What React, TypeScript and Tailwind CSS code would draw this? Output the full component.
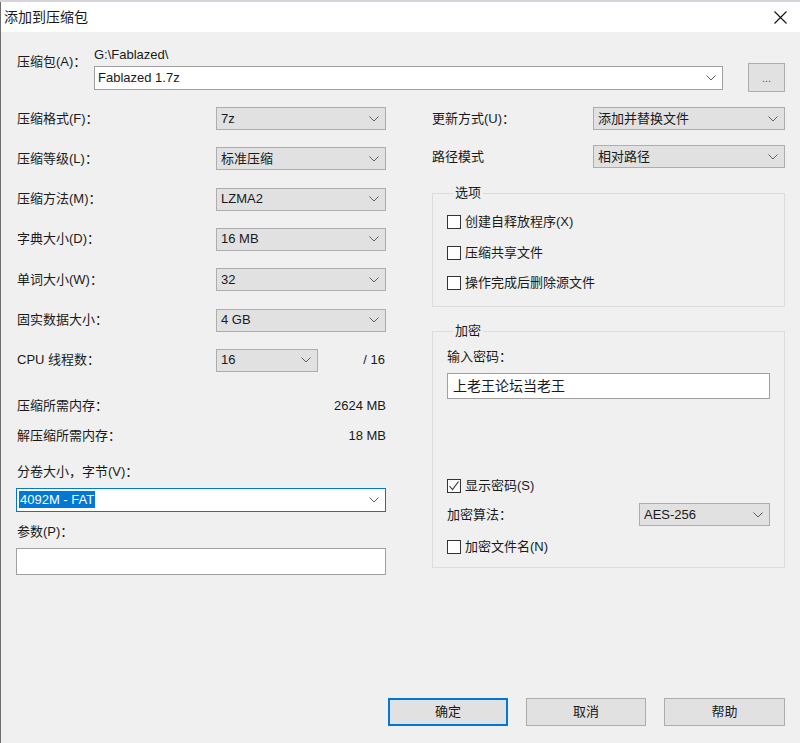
import React from "react"

// little down arrow used on every combo box
function Chevron() {
  return (
    <svg width="10" height="6" viewBox="0 0 10 6" className="shrink-0">
      <polyline points="0.5,0.5 5,5 9.5,0.5" fill="none" stroke="#606060" strokeWidth="1" />
    </svg>
  )
}

function Select({ value, className = "" }: { value: string; className?: string }) {
  return (
    <div
      className={`h-[23px] flex items-center justify-between pl-[4px] pr-[6px] bg-[#e1e1e1] border border-[#adadad] ${className}`}
    >
      <span>{value}</span>
      <Chevron />
    </div>
  )
}

function CheckBox({ label, checked = false }: { label: string; checked?: boolean }) {
  return (
    <div className="h-[16px] flex items-center gap-[4px]">
      <div className="w-[14px] h-[14px] bg-white border border-[#333] flex items-center justify-center">
        {checked && (
          <svg width="12" height="12" viewBox="0 0 12 12">
            <polyline points="1.5,6 4.5,9.5 10.5,1.5" fill="none" stroke="#333" strokeWidth="1.1" />
          </svg>
        )}
      </div>
      <span>{label}</span>
    </div>
  )
}

function Row({ label, children }: { label: string; children: React.ReactNode }) {
  return (
    <div className="h-[23px] flex items-center">
      <span className="flex-1">{label}</span>
      {children}
    </div>
  )
}

export default function App() {
  return (
    <div className="w-[800px] h-[743px] flex flex-col bg-[#f0f0f0] text-[13px] leading-[16px] text-[#1a1a1a] font-['Liberation_Sans','Noto_Sans_CJK_SC',sans-serif]">
      {/* top strip from window behind */}
      <div className="h-[2px] bg-[#d8d4dc]" />

      <div className="flex-1 flex flex-col border-l border-[#6e6e6e]">
        {/* Title bar */}
        <div className="h-[30px] bg-white flex items-center justify-between pl-[3px] pr-[13px]">
          <span className="text-[14px]">添加到压缩包</span>
          <svg width="13" height="13" viewBox="0 0 13 13">
            <path d="M0.5 0.5 L12.5 12.5 M12.5 0.5 L0.5 12.5" stroke="#111" strokeWidth="1.1" />
          </svg>
        </div>

        <div className="flex-1 flex flex-col pl-[16px] pr-[15px]">
          {/* Archive path */}
          <div className="flex items-start mt-[15px]">
            <span className="w-[77px] mt-[7px]">压缩包(A)：</span>
            <div className="flex-1 flex flex-col">
              <span className="h-[16px]">G:\Fablazed\</span>
              <div className="mt-[3px] h-[24px] bg-white border border-[#a0a0a0] flex items-center justify-between pl-[3px] pr-[6px]">
                <span>Fablazed 1.7z</span>
                <Chevron />
              </div>
            </div>
            <div className="ml-[25px] mt-[16px] w-[37px] h-[29px] bg-[#e1e1e1] border border-[#adadad] flex items-center justify-center text-[11px] text-[#555]">
              ...
            </div>
          </div>

          <div className="flex mt-[15px] gap-[46px]">
            {/* Left column */}
            <div className="w-[369px] flex flex-col">
              <div className="flex flex-col gap-[17.33px]">
                <Row label="压缩格式(F)：">
                  <Select value="7z" className="w-[170px]" />
                </Row>
                <Row label="压缩等级(L)：">
                  <Select value="标准压缩" className="w-[170px]" />
                </Row>
                <Row label="压缩方法(M)：">
                  <Select value="LZMA2" className="w-[170px]" />
                </Row>
                <Row label="字典大小(D)：">
                  <Select value="16 MB" className="w-[170px]" />
                </Row>
                <Row label="单词大小(W)：">
                  <Select value="32" className="w-[170px]" />
                </Row>
                <Row label="固实数据大小：">
                  <Select value="4 GB" className="w-[170px]" />
                </Row>
                <div className="h-[23px] flex items-center">
                  <span className="w-[199px]">CPU 线程数：</span>
                  <Select value="16" className="w-[102px]" />
                  <span className="flex-1 text-right pr-[1px]">/ 16</span>
                </div>
              </div>

              <div className="mt-[26px] h-[16px] flex justify-between">
                <span>压缩所需内存：</span>
                <span>2624 MB</span>
              </div>
              <div className="mt-[14px] h-[16px] flex justify-between">
                <span>解压缩所需内存：</span>
                <span>18 MB</span>
              </div>

              <span className="mt-[20px] h-[16px]">分卷大小，字节(V)：</span>
              <div className="mt-[8px] -ml-[1px] w-[370px] h-[24px] bg-white border border-[#0078d7] flex items-center justify-between pl-[2px] pr-[6px]">
                <span className="bg-[#0078d7] text-white px-[1px] leading-[17px]">4092M - FAT</span>
                <Chevron />
              </div>

              <span className="mt-[12px] h-[16px]">参数(P)：</span>
              <div className="mt-[8px] -ml-[1px] w-[370px] h-[27px] bg-white border border-[#a0a0a0]" />
            </div>

            {/* Right column */}
            <div className="w-[353px] flex flex-col">
              <Row label="更新方式(U)：">
                <Select value="添加并替换文件" className="w-[192px]" />
              </Row>
              <div className="mt-[15px]">
                <Row label="路径模式">
                  <Select value="相对路径" className="w-[192px]" />
                </Row>
              </div>

              <fieldset className="mt-[17px] border border-[#dcdcdc] pl-[14px] pb-[15px]">
                <legend className="ml-[6px] px-[2px] h-[16px]">选项</legend>
                <div className="mt-[13px] flex flex-col gap-[14.5px]">
                  <CheckBox label="创建自释放程序(X)" />
                  <CheckBox label="压缩共享文件" />
                  <CheckBox label="操作完成后删除源文件" />
                </div>
              </fieldset>

              <fieldset className="mt-[16px] border border-[#dcdcdc] pl-[14px] pr-[14px] pb-[12px]">
                <legend className="ml-[6px] px-[2px] h-[16px]">加密</legend>
                <span className="block mt-[10px] h-[16px]">输入密码：</span>
                <div className="mt-[8px] h-[26px] bg-white border border-[#a0a0a0] flex items-center pl-[5px] text-[14px]">
                  上老王论坛当老王
                </div>
                <div className="mt-[79px]">
                  <CheckBox label="显示密码(S)" checked />
                </div>
                <div className="mt-[9px]">
                  <Row label="加密算法：">
                    <Select value="AES-256" className="w-[131px]" />
                  </Row>
                </div>
                <div className="mt-[13px]">
                  <CheckBox label="加密文件名(N)" />
                </div>
              </fieldset>
            </div>
          </div>

          <div className="flex-1" />

          {/* Dialog buttons */}
          <div className="flex justify-end gap-[18px] pb-[17px]">
            <button className="w-[120px] h-[28px] bg-[#e1e1e1] border-2 border-[#0078d7]">确定</button>
            <button className="w-[120px] h-[28px] bg-[#e1e1e1] border border-[#adadad]">取消</button>
            <button className="w-[121px] h-[28px] bg-[#e1e1e1] border border-[#adadad]">帮助</button>
          </div>
        </div>
      </div>
    </div>
  )
}
